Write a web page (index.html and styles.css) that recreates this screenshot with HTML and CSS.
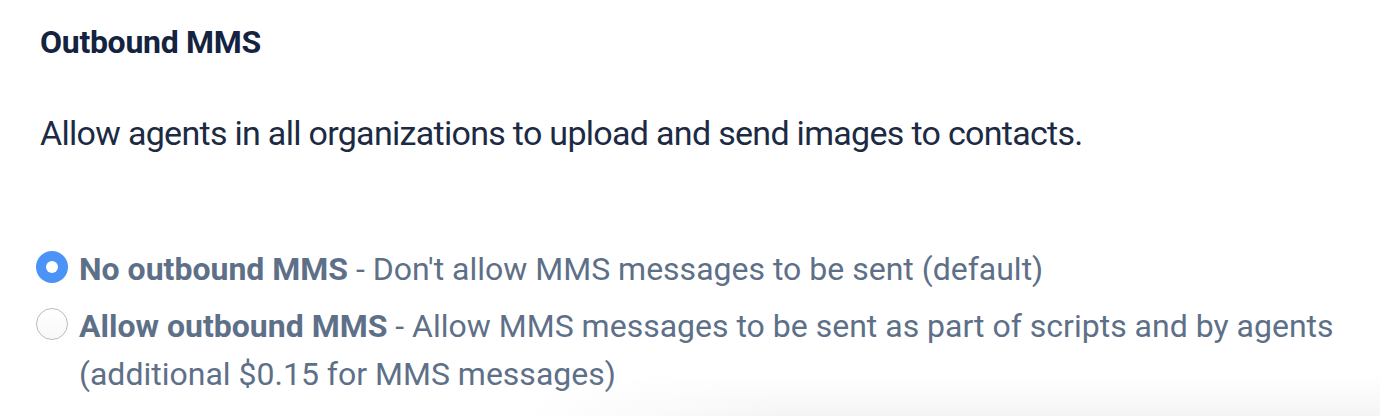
FILE: index.html
```
<!DOCTYPE html>
<html>
<head>
    <link rel="stylesheet" href="styles.css">
</head>
<body>
    <div class="settings-block">
        <h2 class="block-title">Outbound MMS</h2>
        <p class="block-desc">Allow agents in all organizations to upload and send images to contacts.</p>

        <div class="radio-list">
            <label class="radio-row">
                <input type="radio" name="mms" class="radio-input" checked>
                <span class="radio-text"><b>No outbound MMS</b> - Don't allow MMS messages to be sent (default)</span>
            </label>
            <label class="radio-row">
                <input type="radio" name="mms" class="radio-input">
                <span class="radio-text"><b>Allow outbound MMS</b> - Allow MMS messages to be sent as part of scripts and by agents (additional $0.15 for MMS messages)</span>
            </label>
        </div>
    </div>
    <div class="bottom-fade"></div>
</body>
</html>
```

FILE: styles.css
```
* {
    margin: 0;
    padding: 0;
    box-sizing: border-box;
}

body {
    background: #ffffff;
    font-family: Roboto, "Liberation Sans", sans-serif;
    min-height: 100vh;
    position: relative;
    overflow: hidden;
}

.settings-block {
    padding: 22px 20px 0 40px;
}

.block-title {
    font-size: 32px;
    line-height: 40px;
    font-weight: 700;
    letter-spacing: -0.3px;
    color: #14233f;
}

.block-desc {
    margin-top: 47px;
    font-size: 34px;
    line-height: 48px;
    letter-spacing: -0.7px;
    color: #1c2a44;
}

.radio-list {
    margin-top: 88px;
    display: flex;
    flex-direction: column;
    gap: 9px;
}

.radio-row {
    display: flex;
    align-items: flex-start;
    gap: 11px;
    margin-left: -4px;
    cursor: pointer;
}

.radio-input {
    appearance: none;
    -webkit-appearance: none;
    flex: none;
    width: 32px;
    height: 32px;
    margin-top: 6px;
    border-radius: 50%;
    border: 1px solid #bdbdbd;
    background: linear-gradient(#ffffff, #f8f8f8);
    display: flex;
    align-items: center;
    justify-content: center;
}

.radio-input:checked {
    border: none;
    background: #4b93f6;
}

.radio-input:checked::after {
    content: "";
    width: 12px;
    height: 12px;
    border-radius: 50%;
    background: #ffffff;
}

.radio-text {
    font-size: 32px;
    line-height: 48px;
    color: #5e7088;
}

.radio-text b {
    font-weight: 700;
}

/* лёгкая тень снизу справа */
.bottom-fade {
    position: absolute;
    right: 0;
    bottom: 0;
    width: 62%;
    height: 40px;
    background: linear-gradient(to bottom, rgba(240, 240, 240, 0), rgba(240, 240, 240, 0.7));
    -webkit-mask-image: linear-gradient(to right, transparent, #000 30%);
    pointer-events: none;
}
```
